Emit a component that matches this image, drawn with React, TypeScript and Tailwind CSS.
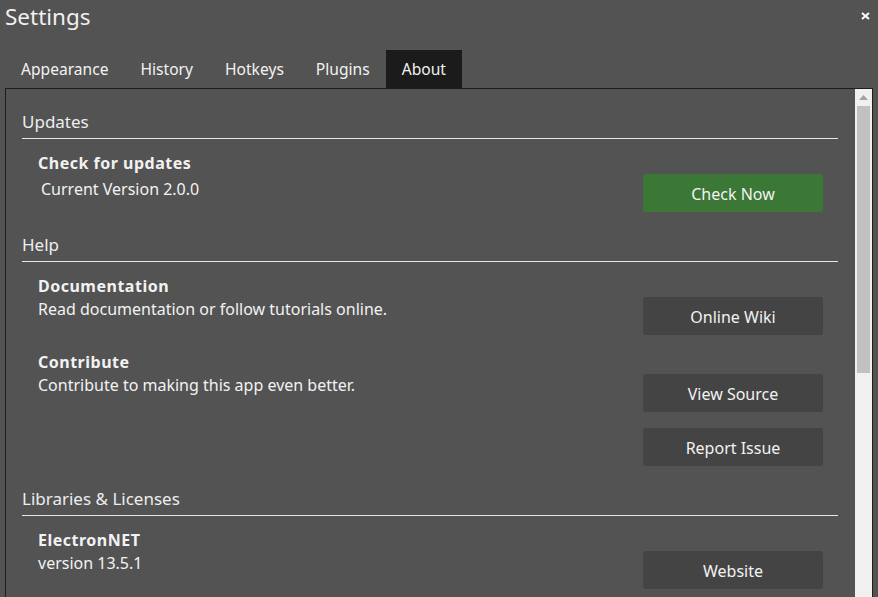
import React from 'react';

const tabs = ['Appearance', 'History', 'Hotkeys', 'Plugins', 'About'];

const Btn: React.FC<{ label: string; green?: boolean; className?: string }> = ({ label, green, className }) => (
  <div
    className={`w-[180px] h-[38px] pt-[2px] rounded-[3px] flex items-center justify-center text-[16px] text-[#f2f2f2] ${
      green ? 'bg-[#3b7735]' : 'bg-[#444444]'
    } ${className ?? ''}`}
  >
    {label}
  </div>
);

const SectionHeader: React.FC<{ title: string }> = ({ title }) => (
  <div className="pt-[21px] pb-[4px] mr-[17px] text-[17px] leading-[24px] text-[#ededed] border-b border-[#e6e6e6]">
    {title}
  </div>
);

const App: React.FC = () => {
  return (
    <div
      className="w-[878px] h-[597px] overflow-hidden bg-[#535353] text-[#f2f2f2] flex flex-col"
      style={{ fontFamily: '"Noto Sans", "Open Sans", sans-serif' }}
    >
      {/* title bar */}
      <div className="flex items-start justify-between h-[50px]">
        <div className="pl-[5px] pt-[1px] text-[22.5px] leading-[32px] text-[#f0f0f0]">Settings</div>
        <svg width="9" height="8" viewBox="0 0 9 8" className="mt-[12px] mr-[8px]">
          <path d="M1 1 L8 7 M8 1 L1 7" stroke="#ffffff" strokeWidth="2" />
        </svg>
      </div>

      {/* tabs */}
      <div className="flex pl-[5px] h-[38px]">
        {tabs.map((t) => (
          <div
            key={t}
            className={`px-[16px] pt-[1px] flex items-center text-[15.6px] ${t === 'About' ? 'bg-[#1b1b1b]' : ''}`}
          >
            {t}
          </div>
        ))}
      </div>

      {/* panel */}
      <div className="mx-[5px] flex-1 border border-[#1e1e1e] border-b-0 flex min-h-0">
        <div className="flex-1 pl-[16px] overflow-hidden">
          <SectionHeader title="Updates" />
          <div className="flex justify-between pr-[32px]">
            <div className="pt-[13px] pl-[16px] text-[16px] leading-[23px]">
              <div className="font-bold tracking-[0.5px]">Check for updates</div>
              <div className="mt-[3px] pl-[3px]">Current Version 2.0.0</div>
            </div>
            <div className="pt-[35px]">
              <Btn label="Check Now" green />
            </div>
          </div>

          <SectionHeader title="Help" />
          <div className="flex justify-between pr-[32px]">
            <div className="pt-[13px] pl-[16px] text-[16px] leading-[23px]">
              <div className="font-bold tracking-[0.5px]">Documentation</div>
              <div>Read documentation or follow tutorials online.</div>
            </div>
            <div className="pt-[35px]">
              <Btn label="Online Wiki" />
            </div>
          </div>
          <div className="flex justify-between pr-[32px] mt-[3px]">
            <div className="pt-[13px] pl-[16px] text-[16px] leading-[23px]">
              <div className="font-bold tracking-[0.5px]">Contribute</div>
              <div>Contribute to making this app even better.</div>
            </div>
            <div className="pt-[36px] flex flex-col gap-[16px]">
              <Btn label="View Source" />
              <Btn label="Report Issue" />
            </div>
          </div>

          <SectionHeader title="Libraries & Licenses" />
          <div className="flex justify-between pr-[32px]">
            <div className="pt-[13px] pl-[16px] text-[16px] leading-[23px]">
              <div className="font-bold tracking-[0.5px]">ElectronNET</div>
              <div>version 13.5.1</div>
            </div>
            <div className="pt-[35px]">
              <Btn label="Website" />
            </div>
          </div>
        </div>

        {/* scrollbar */}
        <div className="w-[17px] bg-[#f0f0f0] flex flex-col items-center">
          <div className="h-[17px] w-full flex items-center justify-center">
            <svg width="9" height="5" viewBox="0 0 9 5">
              <path d="M0 5 L4.5 0 L9 5 Z" fill="#a3a3a3" />
            </svg>
          </div>
          <div className="w-[13px] h-[267px] bg-[#c1c1c1]" />
        </div>
      </div>
    </div>
  );
};

export default App;
